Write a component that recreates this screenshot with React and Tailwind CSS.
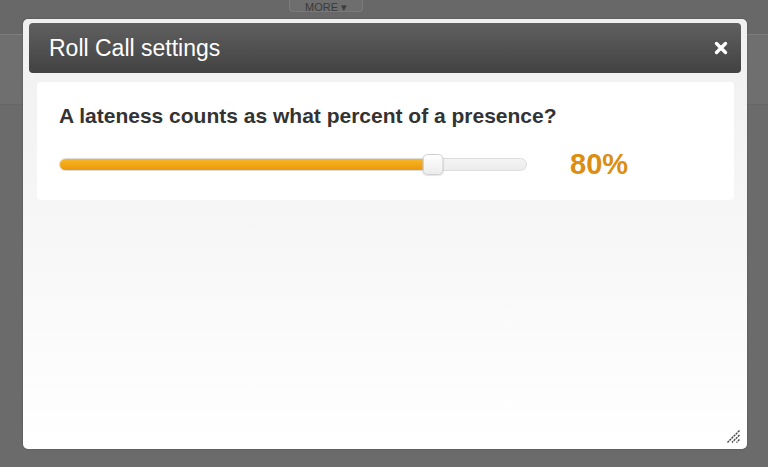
export default function App() {
  const value = 80;

  return (
    <div className="relative h-[467px] w-[768px] overflow-hidden bg-[#6b6b6b] font-['Liberation_Sans',Arial,sans-serif]">
      {/* page behind the overlay */}
      <div className="flex h-[34px] justify-start bg-[#686868]">
        <div className="ml-[289px] flex h-[12px] w-[74px] items-end justify-center overflow-hidden rounded-b border border-t-0 border-[#7a7a7a] bg-[#6e6e6e] text-[11px] leading-[8px] text-[#3a3a3a]">
          MORE ▾
        </div>
      </div>
      <div className="h-[1px] bg-[#7d7d7d]" />
      <div className="h-[70px] border-b border-[#666] bg-[#6f6f6f]" />

      {/* dialog */}
      <div className="absolute left-[23px] top-[19px] flex h-[430px] w-[724px] flex-col rounded-[5px] bg-gradient-to-b from-[#f0f0f0] via-[#f7f7f7] to-white px-[6px] pb-[5px] pt-[4px] shadow-[0_0_2px_rgba(0,0,0,0.3)]">
        <div className="flex h-[50px] items-center justify-between rounded-[4px] bg-gradient-to-b from-[#606060] to-[#424242] pl-[20px] pr-[13px]">
          <span className="text-[23px] text-white">Roll Call settings</span>
          <svg width="14" height="14" viewBox="0 0 14 14">
            <path d="M2.5 2.5 L11.5 11.5 M11.5 2.5 L2.5 11.5" stroke="white" strokeWidth="3.4" strokeLinecap="round" />
          </svg>
        </div>

        <div className="ml-[8px] mr-[7px] mt-[9px] flex h-[118px] flex-col rounded-[4px] bg-white px-[22px] pt-[22px]">
          <p className="text-[21px] font-bold leading-[24px] text-[#333]">
            A lateness counts as what percent of a presence?
          </p>
          <div className="mt-[22px] flex items-center">
            <div className="relative h-[13px] w-[468px] rounded-full border border-[#dcdcdc] bg-gradient-to-b from-[#f4f4f4] to-[#ececec]">
              <div
                className="h-full rounded-l-full bg-gradient-to-b from-[#f8b524] to-[#ea9a08]"
                style={{ width: `${value}%` }}
              />
              <div
                className="absolute top-[-5px] h-[21px] w-[21px] -translate-x-1/2 rounded-[5px] border border-[#cfcfcf] bg-gradient-to-b from-white to-[#ececec] shadow-[0_1px_1px_rgba(0,0,0,0.1)]"
                style={{ left: `${value}%` }}
              />
            </div>
            <span className="ml-[43px] text-[29px] font-bold leading-none text-[#dc8e12]">{value}%</span>
          </div>
        </div>

        <div className="flex flex-1 items-end justify-end">
          <svg width="16" height="16" viewBox="0 0 16 16">
            <path d="M14.5 2.5 L2.5 14.5 M14.5 7 L7 14.5 M14.5 11.5 L11.5 14.5" stroke="#444" strokeWidth="1.4" strokeDasharray="2.2 0.8" />
          </svg>
        </div>
      </div>
    </div>
  );
}
